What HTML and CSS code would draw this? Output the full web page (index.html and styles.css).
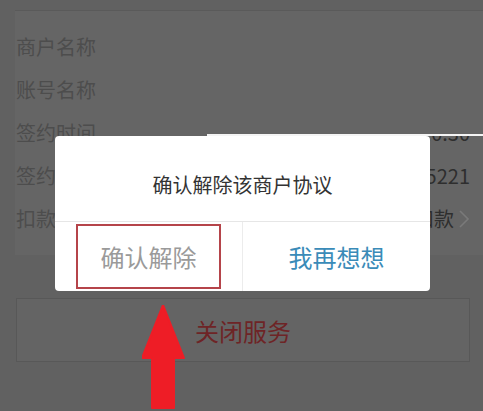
FILE: index.html
```html
<!DOCTYPE html>
<html lang="zh-CN">
<head>
<meta charset="utf-8">
<title>解除商户协议</title>
<link rel="stylesheet" href="styles.css">
</head>
<body>
<div class="page">
  <div class="list">
    <div class="row"><span class="label">商户名称</span><span class="value"></span></div>
    <div class="row"><span class="label">账号名称</span><span class="value"></span></div>
    <div class="row"><span class="label">签约时间</span><span class="value">2019-05-13 10:30</span></div>
    <div class="row"><span class="label">签约协议号</span><span class="value">20190513000015221</span></div>
    <div class="row"><span class="label">扣款方式</span><span class="value">自动扣款<svg class="chevron" viewBox="0 0 12 20" width="12" height="20"><polyline points="2,2 10,10 2,18" fill="none" stroke="#7a7a7a" stroke-width="1.6"/></svg></span></div>
  </div>
  <div class="close-btn">关闭服务</div>
</div>

<div class="redact"></div>

<div class="dialog">
  <div class="dialog-title">确认解除该商户协议</div>
  <div class="dialog-actions">
    <div class="action action-confirm">确认解除</div>
    <div class="action action-cancel">我再想想</div>
  </div>
</div>

<div class="highlight"></div>

<svg class="arrow" viewBox="0 0 44 106" width="44" height="106">
  <polygon points="21,0 42,53 32,53 32,103 10,103 10,53 0,53" fill="#ee1d26" stroke="#ee1d26" stroke-width="2" stroke-linejoin="round"/>
</svg>
</body>
</html>
```

FILE: styles.css
```css
html, body {
  margin: 0;
  padding: 0;
}

body {
  width: 483px;
  height: 411px;
  overflow: hidden;
  background: #616161;
  font-family: "Noto Sans CJK SC", "Noto Sans", sans-serif;
  position: relative;
}

.page {
  padding-top: 10px;
}

.list {
  margin-left: 15px;
  border-top: 1px solid #5a5a5a;
  background: #656565;
  padding: 14px 0 15px 0;
}

.row {
  display: flex;
  justify-content: space-between;
  align-items: center;
  height: 43px;
  padding: 0 13px 0 1px;
  font-size: 20px;
  line-height: 43px;
}

.label {
  color: #4d4d4d;
}

.value {
  color: #2e2e2e;
  display: flex;
  align-items: center;
  gap: 4px;
  white-space: nowrap;
}

.chevron {
  display: block;
}

.close-btn {
  margin: 43px 13px 0 16px;
  height: 64px;
  box-sizing: border-box;
  border: 1px solid #585858;
  background: #646464;
  color: #6e2426;
  font-size: 24px;
  display: flex;
  align-items: center;
  justify-content: center;
}

.redact {
  position: absolute;
  left: 207px;
  top: 112px;
  width: 276px;
  height: 22px;
  background: #656565;
  border-bottom: 2px solid #f4f4f4;
}

.dialog {
  position: absolute;
  left: 55px;
  top: 136px;
  width: 375px;
  height: 155px;
  background: #fff;
  border-radius: 4px;
  display: flex;
  flex-direction: column;
}

.dialog-title {
  height: 86px;
  box-sizing: border-box;
  border-bottom: 1px solid #e6e6e6;
  display: flex;
  align-items: flex-end;
  justify-content: center;
  padding-bottom: 22px;
  font-size: 20px;
  line-height: 28px;
  color: #333;
}

.dialog-actions {
  flex: 1;
  display: flex;
}

.action {
  flex: 1;
  display: flex;
  align-items: center;
  justify-content: center;
  font-size: 24px;
}

.action-confirm {
  color: #9a9a9a;
  border-right: 1px solid #ececec;
}

.action-cancel {
  color: #3a8bb8;
}

.highlight {
  position: absolute;
  left: 76px;
  top: 224px;
  width: 145px;
  height: 65px;
  box-sizing: border-box;
  border: 2px solid #b5444a;
}

.arrow {
  position: absolute;
  left: 142px;
  top: 305px;
}
```
